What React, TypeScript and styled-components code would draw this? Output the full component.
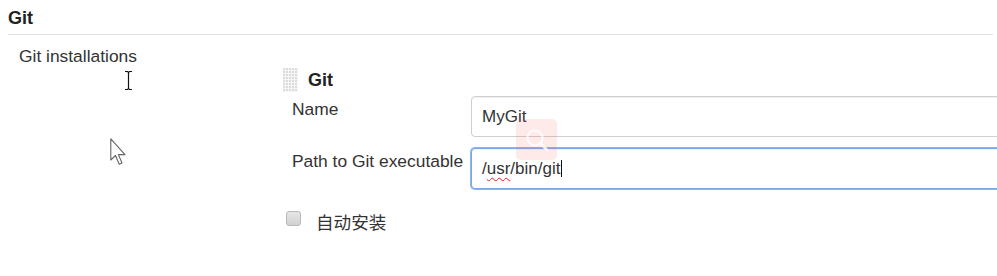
import React from 'react';
import styled, { createGlobalStyle } from 'styled-components';

const Global = createGlobalStyle`
  html, body { margin: 0; padding: 0; background: #fff; overflow: hidden; }
  body {
    font-family: "Liberation Sans", Arial, "Noto Sans CJK SC", sans-serif;
    color: #333;
  }
`;

const Page = styled.div`
  position: relative;
  width: 997px;
  height: 276px;
  overflow: hidden;
`;

const SectionHeader = styled.div`
  margin: 0 4px 0 8px;
  padding: 8px 0 6px;
  font-size: 18px;
  font-weight: bold;
  line-height: 20px;
  color: #222;
  border-bottom: 1px solid #e2e2e2;
`;

const SettingLabel = styled.div`
  margin-top: 11px;
  padding-left: 19px;
  font-size: 17.4px;
  line-height: 20px;
  color: #333;
`;

const RepeatedChunk = styled.div`
  margin: 2px 0 0 283px;
  width: 900px;
  display: flex;
  flex-direction: column;
`;

const ChunkTitle = styled.div`
  display: flex;
  align-items: center;
  gap: 10px;
  height: 24px;
  font-size: 18px;
  font-weight: bold;
  line-height: 20px;
  color: #222;
`;

const DragHandle = styled.span`
  width: 15px;
  height: 24px;
  background-color: #dcdcdc;
  background-image:
    repeating-linear-gradient(to right, transparent 0 2px, #f6f6f6 2px 3px),
    repeating-linear-gradient(to bottom, transparent 0 2px, #f6f6f6 2px 3px);
`;

const FieldRow = styled.div<{ $gap: number }>`
  display: flex;
  align-items: flex-start;
  margin-top: ${p => p.$gap}px;
`;

const FieldLabel = styled.div`
  width: 188px;
  box-sizing: border-box;
  padding: 3px 0 0 9px;
  font-size: 17.4px;
  line-height: 20px;
  color: #333;
  white-space: nowrap;
`;

const FieldBox = styled.div<{ $focused?: boolean }>`
  width: 600px;
  height: 41px;
  box-sizing: border-box;
  display: flex;
  align-items: center;
  padding: 0 10px;
  font-size: 17px;
  line-height: 20px;
  color: #333;
  border-radius: 4px;
  border: 1px solid ${p => (p.$focused ? '#7ba6ef' : '#cfcfcf')};
  box-shadow: ${p =>
    p.$focused
      ? '0 0 0 1px #8ab3f2, inset 0 1px 1px rgba(0,0,0,0.05)'
      : 'inset 0 1px 1px rgba(0,0,0,0.06)'};
  background: #fff;
`;

const Misspelled = styled.span`
  text-decoration: underline wavy #e02020;
  text-decoration-thickness: 1px;
  text-underline-offset: 3px;
  text-decoration-skip-ink: none;
`;

const Caret = styled.span`
  display: inline-block;
  width: 1px;
  height: 17px;
  margin-left: 1px;
  background: #111;
`;

const CheckRow = styled.div`
  display: flex;
  align-items: flex-start;
  margin-top: 22px;
  padding-left: 3px;
  gap: 15px;
`;

const CheckBox = styled.span`
  width: 15px;
  height: 15px;
  box-sizing: border-box;
  border: 1px solid #b9b9b9;
  border-radius: 3px;
  background: linear-gradient(#e6e6e6, #d2d2d2);
`;

const CheckLabel = styled.span`
  font-family: "Noto Sans CJK SC", "Liberation Sans", sans-serif;
  font-size: 17.6px;
  line-height: 20px;
  margin-top: 1px;
  color: #333;
`;

const SearchOverlay = styled.div`
  position: absolute;
  left: 516px;
  top: 119px;
  width: 41px;
  height: 41px;
  border-radius: 5px;
  background: rgba(255, 90, 90, 0.13);
  display: flex;
  align-items: center;
  justify-content: center;
`;

const CursorLayer = styled.div<{ $x: number; $y: number }>`
  position: absolute;
  left: ${p => p.$x}px;
  top: ${p => p.$y}px;
  line-height: 0;
`;

export default function App() {
  return (
    <Page>
      <Global />
      <SectionHeader>Git</SectionHeader>
      <SettingLabel>Git installations</SettingLabel>
      <RepeatedChunk>
        <ChunkTitle>
          <DragHandle />
          <span>Git</span>
        </ChunkTitle>
        <FieldRow $gap={4}>
          <FieldLabel>Name</FieldLabel>
          <FieldBox>MyGit</FieldBox>
        </FieldRow>
        <FieldRow $gap={11}>
          <FieldLabel>Path to Git executable</FieldLabel>
          <FieldBox $focused>
            /<Misspelled>usr</Misspelled>/bin/git
            <Caret />
          </FieldBox>
        </FieldRow>
        <CheckRow>
          <CheckBox />
          <CheckLabel>自动安装</CheckLabel>
        </CheckRow>
      </RepeatedChunk>

      <SearchOverlay>
        <svg width="26" height="26" viewBox="0 0 26 26" fill="none">
          <circle cx="11" cy="11" r="7.5" stroke="#fff" strokeWidth="2.2" opacity="0.85" />
          <path d="M16.5 16.5 L23 23" stroke="#fff" strokeWidth="2.6" strokeLinecap="round" opacity="0.85" />
        </svg>
      </SearchOverlay>

      <CursorLayer $x={124} $y={70}>
        <svg width="9" height="21" viewBox="0 0 9 21">
          <path d="M1 1.5 H3.5 L4.5 2.5 L5.5 1.5 H8 M4.5 2.5 V18.5 M1 19.5 H3.5 L4.5 18.5 L5.5 19.5 H8"
            stroke="#fff" strokeWidth="3" fill="none" />
          <path d="M1 1.5 H3.5 L4.5 2.5 L5.5 1.5 H8 M4.5 2.5 V18.5 M1 19.5 H3.5 L4.5 18.5 L5.5 19.5 H8"
            stroke="#111" strokeWidth="1.2" fill="none" />
        </svg>
      </CursorLayer>

      <CursorLayer $x={110} $y={138}>
        <svg width="18" height="28" viewBox="0 0 18 28">
          <path d="M0.8 0.8 L0.8 22 L5.5 17.5 L9.2 26.2 L12 25 L8.4 16.6 L15 16.6 Z"
            fill="#fff" stroke="#666" strokeWidth="1.1" strokeLinejoin="round" />
        </svg>
      </CursorLayer>
    </Page>
  );
}
